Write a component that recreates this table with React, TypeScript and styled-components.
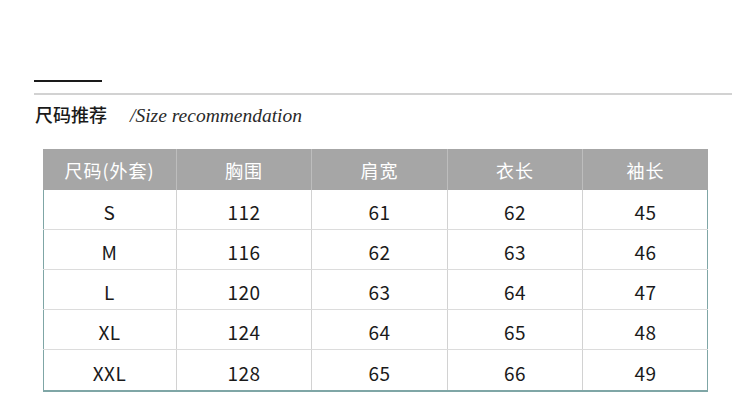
import React from 'react';
import styled, { createGlobalStyle } from 'styled-components';

const GlobalStyle = createGlobalStyle`
  html, body {
    margin: 0;
    padding: 0;
    background: #ffffff;
  }
`;

const headers = ['尺码(外套)', '胸围', '肩宽', '衣长', '袖长'];

const rows = [
  ['S', '112', '61', '62', '45'],
  ['M', '116', '62', '63', '46'],
  ['L', '120', '63', '64', '47'],
  ['XL', '124', '64', '65', '48'],
  ['XXL', '128', '65', '66', '49'],
];

const colWidths = [134, 135, 136, 135, 125];

export default function App() {
  return (
    <Page>
      <GlobalStyle />
      <Heading>
        <DarkRule />
        <GrayRule />
        <TitleRow>
          <TitleCn>尺码推荐</TitleCn>
          <TitleEn>/Size recommendation</TitleEn>
        </TitleRow>
      </Heading>
      <Table>
        <HeadRow>
          {headers.map((h, i) => (
            <HeadCell key={h} $w={colWidths[i]} $last={i === headers.length - 1}>
              {h}
            </HeadCell>
          ))}
        </HeadRow>
        {rows.map((r, ri) => (
          <BodyRow key={r[0]} $last={ri === rows.length - 1}>
            {r.map((v, i) => (
              <Cell key={i} $w={colWidths[i]} $last={i === r.length - 1}>
                {v}
              </Cell>
            ))}
          </BodyRow>
        ))}
      </Table>
    </Page>
  );
}

const Page = styled.div`
  width: 750px;
  height: 412px;
  overflow: hidden;
  box-sizing: border-box;
  padding-top: 80px;
`;

const Heading = styled.div`
  padding: 0 18px 0 34px;
`;

const DarkRule = styled.div`
  width: 68px;
  height: 2px;
  background: #1a1a1a;
`;

const GrayRule = styled.div`
  margin-top: 11px;
  height: 2px;
  background: #d2d2d2;
`;

const TitleRow = styled.div`
  display: flex;
  align-items: baseline;
  gap: 23px;
  margin-top: 7px;
  padding-left: 1px;
`;

const TitleCn = styled.span`
  font-family: 'Noto Sans CJK SC', sans-serif;
  font-size: 18px;
  font-weight: 500;
  color: #1a1a1a;
  line-height: 24px;
`;

const TitleEn = styled.span`
  font-family: 'Liberation Serif', serif;
  font-style: italic;
  font-size: 19.5px;
  color: #2a2a2a;
`;

const Table = styled.div`
  margin: 22px 0 0 43px;
  width: 665px;
  border-left: 1px solid #7fa6a6;
  border-right: 1px solid #7fa6a6;
  border-bottom: 2px solid #7fa6a6;
  box-sizing: border-box;
`;

const HeadRow = styled.div`
  display: flex;
  height: 41px;
  background: #a6a6a6;
  margin: 0 -1px;
`;

const HeadCell = styled.div<{ $w: number; $last: boolean }>`
  width: ${(p) => p.$w}px;
  flex: none;
  display: flex;
  align-items: center;
  justify-content: center;
  box-sizing: border-box;
  border-right: ${(p) => (p.$last ? 'none' : '1px solid #bdbdbd')};
  font-family: 'Noto Sans CJK SC', sans-serif;
  font-size: 18px;
  color: #ffffff;
  letter-spacing: 1px;
`;

const BodyRow = styled.div<{ $last: boolean }>`
  display: flex;
  height: 40px;
  margin: 0 -1px;
  border-bottom: ${(p) => (p.$last ? 'none' : '1px solid #dcdcdc')};
  box-sizing: border-box;
`;

const Cell = styled.div<{ $w: number; $last: boolean }>`
  width: ${(p) => p.$w}px;
  flex: none;
  display: flex;
  align-items: center;
  justify-content: center;
  box-sizing: border-box;
  padding-top: 4px;
  border-right: ${(p) => (p.$last ? 'none' : '1px solid #d2d2d2')};
  font-family: 'Noto Sans CJK SC', sans-serif;
  font-size: 19px;
  color: #1a1a1a;
  letter-spacing: 0.5px;
`;
